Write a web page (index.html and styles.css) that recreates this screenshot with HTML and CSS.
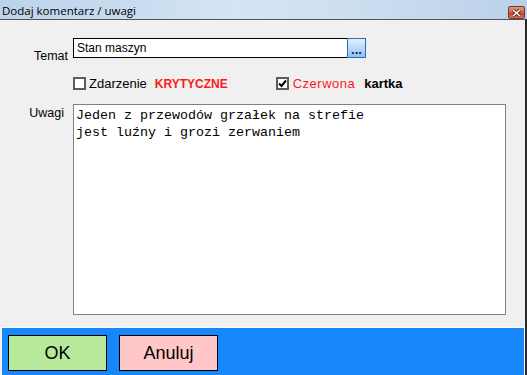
FILE: index.html
```html
<!DOCTYPE html>
<html lang="pl">
<head>
  <meta charset="UTF-8">
  <title>Dodaj komentarz / uwagi</title>
  <link rel="stylesheet" href="styles.css">
</head>
<body>
  <div class="window">
    <div class="titlebar">
      <span class="title">Dodaj komentarz / uwagi</span>
      <span class="close">
        <svg width="9" height="8" viewBox="0 0 9 8">
          <path d="M1 1 L8 7 M8 1 L1 7" stroke="#5a1a10" stroke-width="3"/>
          <path d="M1 1 L8 7 M8 1 L1 7" stroke="#fff" stroke-width="1.6"/>
        </svg>
      </span>
    </div>

    <div class="client">
      <div class="form">
        <div class="row row-topic">
          <label class="label" for="topic">Temat</label>
          <div class="picker">
            <input type="text" id="topic" class="topic-input" value="Stan maszyn">
            <button class="dots">...</button>
          </div>
        </div>

        <div class="row row-checks">
          <span class="check">
            <span class="box"></span>
            <span class="check-text">Zdarzenie</span>
            <b class="red">KRYTYCZNE</b>
          </span>
          <span class="check check-card">
            <span class="box">
              <svg width="9" height="9" viewBox="0 0 9 9">
                <path d="M1 4.5 L3.5 7 L8 1.5" fill="none" stroke="#000" stroke-width="2"/>
              </svg>
            </span>
            <span class="red red-card">Czerwona</span>
            <b class="card">kartka</b>
          </span>
        </div>

        <div class="row row-notes">
          <label class="label label-notes" for="notes">Uwagi</label>
          <textarea id="notes" class="notes">Jeden z przewodów grzałek na strefie
jest luźny i grozi zerwaniem</textarea>
        </div>
      </div>

      <div class="actions">
        <button class="btn btn-ok">OK</button>
        <button class="btn btn-cancel">Anuluj</button>
      </div>
    </div>
  </div>
</body>
</html>
```

FILE: styles.css
```css
* {
  margin: 0;
  padding: 0;
  box-sizing: border-box;
}

body {
  width: 527px;
  height: 375px;
  overflow: hidden;
  background-color: #f0f0f0;
  font-family: 'Liberation Sans', Arial, sans-serif;
  color: #000;
}

.window {
  display: flex;
  flex-direction: column;
  height: 375px;
}

/* pasek tytułu */
.titlebar {
  height: 22px;
  display: flex;
  align-items: flex-start;
  justify-content: space-between;
  background: linear-gradient(to right, #bcd3ea 0%, #d4e4f4 45%, #c9dcef 75%, #b9d0e8 100%);
}

.title {
  font-family: 'Open Sans', 'Noto Sans', sans-serif;
  font-size: 11.5px;
  color: #000;
  padding: 3px 0 0 2px;
}

.close {
  width: 17px;
  height: 13px;
  margin: 6px 2px 0 0;
  display: flex;
  align-items: center;
  justify-content: center;
  border: 1px solid #6b3a36;
  border-radius: 2px;
  background: linear-gradient(#e49a85 0%, #cf5b43 50%, #c1432c 55%, #d8735a 100%);
}

.client {
  flex: 1;
  display: flex;
  flex-direction: column;
  border-top: 1px solid #555;
  border-right: 2px solid #2b2b2b;
  background-color: #f0f0f0;
}

.form {
  flex: 1;
  padding: 18px 17px 12px 0;
}

.row {
  display: flex;
}

.label {
  width: 68px;
  text-align: right;
  font-size: 12.5px;
  color: #000;
}

.row-topic .label {
  padding-top: 11px;
}

.picker {
  display: flex;
  margin-left: 5px;
}

.topic-input {
  width: 274px;
  height: 20px;
  border: 1px solid #000;
  border-right: none;
  padding: 0 3px;
  font-family: 'Liberation Sans', Arial, sans-serif;
  font-size: 12px;
  color: #000;
  background-color: #fff;
  outline: none;
}

.dots {
  width: 19px;
  height: 20px;
  border: 1px solid #2d6db8;
  background: linear-gradient(#e2f0ff 0%, #b9d9fb 50%, #8ec0f3 100%);
  color: #0b1f4a;
  font-family: 'Liberation Sans', Arial, sans-serif;
  font-size: 13px;
  font-weight: bold;
  line-height: 10px;
  padding-top: 3px;
}

.row-checks {
  margin-top: 14px;
  padding-left: 73px;
  height: 13px;
  align-items: center;
}

.check {
  display: flex;
  align-items: center;
  font-size: 13px;
}

.check-card {
  margin-left: 48px;
}

.box {
  width: 13px;
  height: 13px;
  border: 2px solid #5c5c5c;
  background-color: #fff;
  display: flex;
  align-items: center;
  justify-content: center;
  margin-right: 3px;
}

.red {
  color: #ff1a1a;
}

.red-card {
  letter-spacing: 0.5px;
  margin-left: 1px;
}

b.red {
  font-size: 12px;
  margin-left: 8px;
}

.card {
  margin-left: 9px;
  color: #000;
}

.row-notes {
  margin-top: 14px;
}

.label-notes {
  width: 64px;
  margin-right: 9px;
  padding-top: 2px;
}

.notes {
  width: 433px;
  height: 211px;
  border: 1px solid #828282;
  background-color: #fff;
  resize: none;
  outline: none;
  padding: 2px 2px;
  font-family: 'Liberation Mono', 'Courier New', monospace;
  font-size: 13.33px;
  line-height: 17px;
  color: #000;
}

/* dolny panel z przyciskami */
.actions {
  height: 50px;
  margin-left: 2px;
  border-top: 1px solid #fff;
  border-right: 1px solid #fff;
  background-color: #1788fc;
  display: flex;
  gap: 12px;
  padding: 7px 0 0 6px;
}

.btn {
  width: 99px;
  height: 36px;
  border: 1px solid #000;
  font-family: 'Liberation Sans', Arial, sans-serif;
  font-size: 18px;
  color: #000;
}

.btn-ok {
  background-color: #b8e99a;
}

.btn-cancel {
  background-color: #ffc7c7;
}
```
